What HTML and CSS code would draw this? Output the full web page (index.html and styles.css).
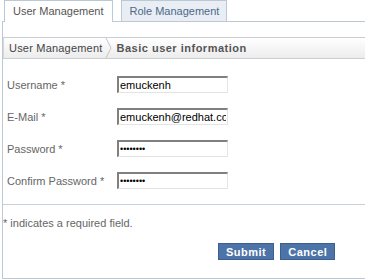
FILE: index.html
```html
<!DOCTYPE html>
<html lang="en">
<head>
  <meta charset="UTF-8" />
  <title>User Management</title>
  <link rel="stylesheet" href="styles.css">
</head>
<body>

<div class="tabs">
  <div class="tab tab-active">User Management</div>
  <div class="tab">Role Management</div>
</div>

<div class="panel">
  <div class="breadcrumb">
    <span class="crumb">User Management</span>
    <svg class="crumb-sep" width="8" height="20" viewBox="0 0 8 20">
      <path d="M1 0 L6 10 L1 20" fill="none" stroke="#c4c4c4" stroke-width="1" />
    </svg>
    <span class="crumb-current">Basic user information</span>
  </div>

  <form class="user-form">
    <div class="form-row">
      <label for="username">Username *</label>
      <input type="text" id="username" value="emuckenh" />
    </div>
    <div class="form-row">
      <label for="email">E-Mail *</label>
      <input type="text" id="email" value="emuckenh@redhat.com" />
    </div>
    <div class="form-row">
      <label for="password">Password *</label>
      <input type="password" id="password" value="secret12" />
    </div>
    <div class="form-row">
      <label for="confirm">Confirm Password *</label>
      <input type="password" id="confirm" value="secret12" />
    </div>
  </form>

  <div class="form-footer">
    <p class="required-note">* indicates a required field.</p>
    <div class="buttons">
      <button class="btn" type="button">Submit</button>
      <button class="btn" type="button">Cancel</button>
    </div>
  </div>
</div>

</body>
</html>
```

FILE: styles.css
```css
body {
  font-family: 'Liberation Sans', Arial, sans-serif;
  font-size: 11px;
  margin: 0;
  padding: 0;
  background-color: #fff;
  color: #555;
}

.tabs {
  display: flex;
  gap: 8px;
  padding-left: 4px;
  height: 21px;
}

.tab {
  height: 20px;
  line-height: 20px;
  padding: 0 7px 0 8px;
  border: 1px solid #bcc8d4;
  border-bottom: none;
  background-color: #e8eef4;
  color: #4d6987;
}

.tab-active {
  height: 21px;
  padding: 0 8px;
  background-color: #fff;
  color: #555;
  position: relative;
  z-index: 1;
}

.panel {
  margin-left: 2px;
  border-top: 1px solid #bcc8d4;
  border-left: 1px solid #bcc8d4;
  border-bottom: 1px solid #bcc8d4;
  height: 256px;
}

.breadcrumb {
  display: flex;
  align-items: center;
  margin-top: 15px;
  height: 20px;
  border-top: 1px solid #c8ced4;
  border-bottom: 1px solid #c8ced4;
  border-left: 1px solid #d4d8dc;
  background: linear-gradient(#ffffff, #ececec);
  padding-left: 5px;
}

.crumb {
  color: #444;
  letter-spacing: 0.2px;
}

.crumb-sep {
  display: block;
  margin: 0 4px 0 2px;
}

.crumb-current {
  color: #555;
  font-weight: 700;
  letter-spacing: 0.5px;
}

.user-form {
  margin: 17px 0 0 0;
  padding-left: 4px;
}

.form-row {
  display: flex;
  align-items: center;
  height: 17px;
  margin-bottom: 15px;
}

.form-row label {
  width: 110px;
  color: #666;
}

.form-row input {
  box-sizing: border-box;
  width: 111px;
  height: 17px;
  margin: 0;
  padding: 0 1px;
  font-family: 'Liberation Sans', Arial, sans-serif;
  font-size: 11px;
  color: #000;
  border-top: 2px solid #808080;
  border-left: 2px solid #808080;
  border-right: 1px solid #e4e4e4;
  border-bottom: 1px solid #e4e4e4;
  outline: none;
}

.form-row input[type="password"] {
  font-size: 9px;
  letter-spacing: 0;
}

.form-footer {
  margin-top: 2px;
  border-top: 1px solid #c8d0d8;
}

.required-note {
  margin: 12px 0 0 0;
  color: #666;
  line-height: 13px;
}

.buttons {
  display: flex;
  gap: 6px;
  padding-left: 215px;
  margin-top: 13px;
}

.btn {
  height: 17px;
  padding: 0 7px;
  border: 1px solid #3d5f8c;
  background-color: #4c74a8;
  color: #fff;
  font-family: 'Liberation Sans', Arial, sans-serif;
  font-size: 11px;
  font-weight: 700;
  letter-spacing: 0.5px;
  cursor: pointer;
}
```
